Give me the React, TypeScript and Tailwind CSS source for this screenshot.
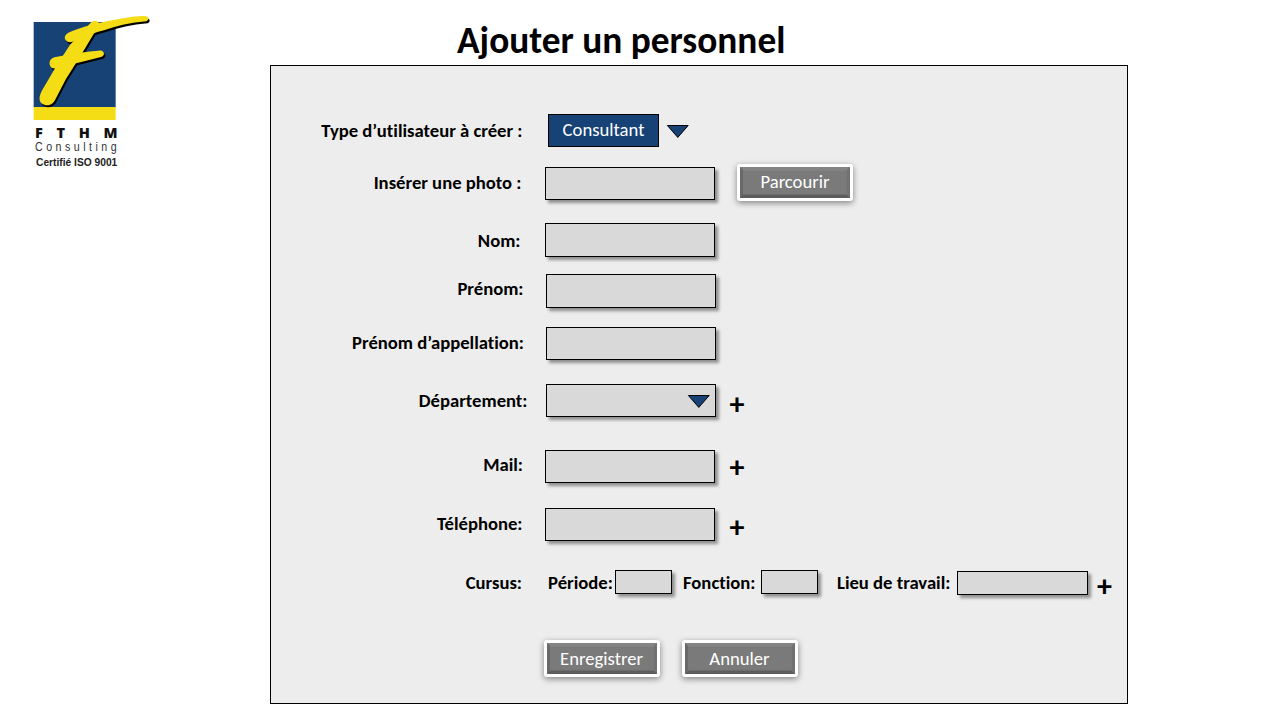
import type { ReactNode } from "react";
import { clsx } from "clsx";

function Label({ children, className }: { children: ReactNode; className?: string }) {
  return (
    <span className={clsx("shrink-0 whitespace-nowrap text-[18.67px] leading-[22px] font-bold", className)}>
      {children}
    </span>
  );
}

function Field({ className, children }: { className?: string; children?: ReactNode }) {
  return (
    <div
      className={clsx(
        "flex shrink-0 items-start justify-end border border-black bg-[#d9d9d9] shadow-[3px_3px_3px_rgba(0,0,0,0.4)]",
        className,
      )}
    >
      {children}
    </div>
  );
}

function BevelButton({ className, children }: { className?: string; children: ReactNode }) {
  return (
    <button
      className={clsx(
        "h-[37px] w-[116px] shrink-0 rounded-[3px] border-[3px] border-white bg-white shadow-[0_2px_6px_rgba(0,0,0,0.45)]",
        className,
      )}
    >
      <span className="flex h-full items-center justify-center border-[3px] border-t-[#848484] border-r-[#717171] border-b-[#5c5c5c] border-l-[#696969] bg-[#7a7a7a] text-[18.67px] leading-[22px] text-white shadow-[inset_0_1px_1px_#818181,inset_0_-1px_1px_#6c6c6c]">
        {children}
      </span>
    </button>
  );
}

function Arrow({ className }: { className?: string }) {
  return (
    <svg className={clsx("shrink-0", className)} width="24" height="15" viewBox="0 0 24 15">
      <path d="M1.4 1.5H22.2L11.8 13.4Z" fill="#174276" stroke="#000" strokeWidth="1" />
    </svg>
  );
}

function Plus({ className }: { className?: string }) {
  return (
    <button className={clsx("w-[20px] shrink-0 text-center text-[30px] leading-[32px] font-bold", className)}>+</button>
  );
}

function LogoMark() {
  return (
    <>
      <path d="M147 87C190 68 255 53 310 44C345 38 370 36 378 38Q383 41 378 44C345 47 290 57 248 72C215 80 185 94 158 105C140 112 132 97 147 87Z" />
      <path d="M217 55C224 49 236 52 232 60L178 150L135 218L100 285C90 302 63 299 63 280C63 270 68 262 76 248L116 180L153 123Z" />
      <path d="M104 161C145 153 195 145 242 141Q252 145 244 151C205 162 155 173 108 186C90 188 88 167 104 161Z" />
    </>
  );
}

function Logo() {
  return (
    <div className="ml-5 mt-[5px] h-[170px] w-[140px]">
      <svg className="block" width="140" height="117" viewBox="0 0 420 351">
        <rect x="41" y="51" width="246" height="256" fill="#174276" />
        <rect x="41" y="306" width="246" height="39" fill="#f5dd16" />
        <g fill="#000" stroke="#000" strokeWidth="9" strokeLinejoin="round" transform="translate(4 6)">
          <LogoMark />
        </g>
        <g fill="#f5dd16" stroke="#f5dd16" strokeWidth="9" strokeLinejoin="round">
          <LogoMark />
        </g>
      </svg>
      <div className="ml-[15px] mt-[3px] flex h-[15px] w-[82.5px] justify-between font-['Open_Sans',sans-serif] text-[14.5px] leading-[15px] font-extrabold text-[#111]">
        <span>F</span>
        <span>T</span>
        <span>H</span>
        <span>M</span>
      </div>
      <div className="ml-[15px] h-[14px] w-[120px] origin-left scale-x-[0.85] whitespace-nowrap font-['Liberation_Sans',sans-serif] text-[12.5px] leading-[14px] tracking-[4.1px] text-[#333]">
        Consulting
      </div>
      <div className="ml-[15.5px] mt-[1px] h-[14px] w-[120px] origin-left scale-x-[0.93] whitespace-nowrap font-['Liberation_Sans',sans-serif] text-[11px] leading-[14px] font-bold text-[#222]">
        Certifié ISO 9001
      </div>
    </div>
  );
}

export default function App() {
  return (
    <div className="flex h-[720px] w-[1280px] items-start overflow-hidden bg-white font-['Carlito','Calibri','Lato',sans-serif] text-black [font-variant-ligatures:none]">
      <aside className="w-[270px] shrink-0">
        <Logo />
      </aside>
      <main className="w-[858px] shrink-0 pt-[18px]">
        <h1 className="ml-[187px] h-[47px] whitespace-nowrap text-[37.33px] leading-[44px] font-bold">
          Ajouter un personnel
        </h1>
        <section className="flex h-[639px] flex-col border border-black bg-[#ededed] pt-[48px]">
          <div className="flex h-[53px] shrink-0 items-start">
            <Label className="mt-[6px] w-[277px] pr-[25.5px] text-right">Type d’utilisateur à créer :</Label>
            <div className="flex h-[33px] w-[111px] items-start justify-center border border-black bg-[#174276] pt-[4px] text-[18.67px] leading-[22px] text-white">
              Consultant
            </div>
            <Arrow className="ml-[7px] mt-[10px]" />
          </div>
          <div className="flex h-[56px] shrink-0 items-start">
            <Label className="mt-[5px] w-[274px] pr-[23.5px] text-right">Insérer une photo :</Label>
            <Field className="h-[33px] w-[170px]" />
            <BevelButton className="ml-[22px] -mt-[3.5px]">Parcourir</BevelButton>
          </div>
          <div className="flex h-[51px] shrink-0 items-start">
            <Label className="mt-[7px] w-[274px] pr-[24.5px] text-right">Nom:</Label>
            <Field className="h-[34px] w-[170px]" />
          </div>
          <div className="flex h-[53px] shrink-0 items-start">
            <Label className="mt-[4px] w-[275px] pr-[22.5px] text-right">Prénom:</Label>
            <Field className="h-[34px] w-[170px]" />
          </div>
          <div className="flex h-[57px] shrink-0 items-start">
            <Label className="mt-[5px] w-[275px] pr-[22px] text-right">Prénom d’appellation:</Label>
            <Field className="h-[33px] w-[170px]" />
          </div>
          <div className="flex h-[66px] shrink-0 items-start">
            <Label className="mt-[6px] w-[275px] pr-[18.5px] text-right">Département:</Label>
            <Field className="h-[33px] w-[170px] pt-[9px] pr-[4px]">
              <Arrow />
            </Field>
            <Plus className="ml-[11px] mt-[4px]" />
          </div>
          <div className="flex h-[58px] shrink-0 items-start">
            <Label className="mt-[4px] w-[274px] pr-[22px] text-right">Mail:</Label>
            <Field className="h-[33px] w-[170px]" />
            <Plus className="ml-[12px] mt-[1px]" />
          </div>
          <div className="flex h-[62px] shrink-0 items-start">
            <Label className="mt-[5px] w-[274px] pr-[22.5px] text-right">Téléphone:</Label>
            <Field className="h-[33px] w-[170px]" />
            <Plus className="ml-[12px] mt-[3px]" />
          </div>
          <div className="flex h-[70px] shrink-0 items-start">
            <Label className="mt-[2px] w-[277px] pr-[26px] text-right">Cursus:</Label>
            <Label className="mt-[2px] w-[67px]">Période:</Label>
            <Field className="h-[24px] w-[57px]" />
            <Label className="ml-[11px] mt-[2px] w-[78px]">Fonction:</Label>
            <Field className="h-[24px] w-[57px]" />
            <Label className="ml-[19px] mt-[2px] w-[120px]">Lieu de travail:</Label>
            <Field className="mt-[1px] h-[24px] w-[131px]" />
            <Plus className="ml-[6.5px]" />
          </div>
          <div className="flex shrink-0 items-start gap-[22px] pl-[272.5px]">
            <BevelButton>Enregistrer</BevelButton>
            <BevelButton>Annuler</BevelButton>
          </div>
        </section>
      </main>
    </div>
  );
}
